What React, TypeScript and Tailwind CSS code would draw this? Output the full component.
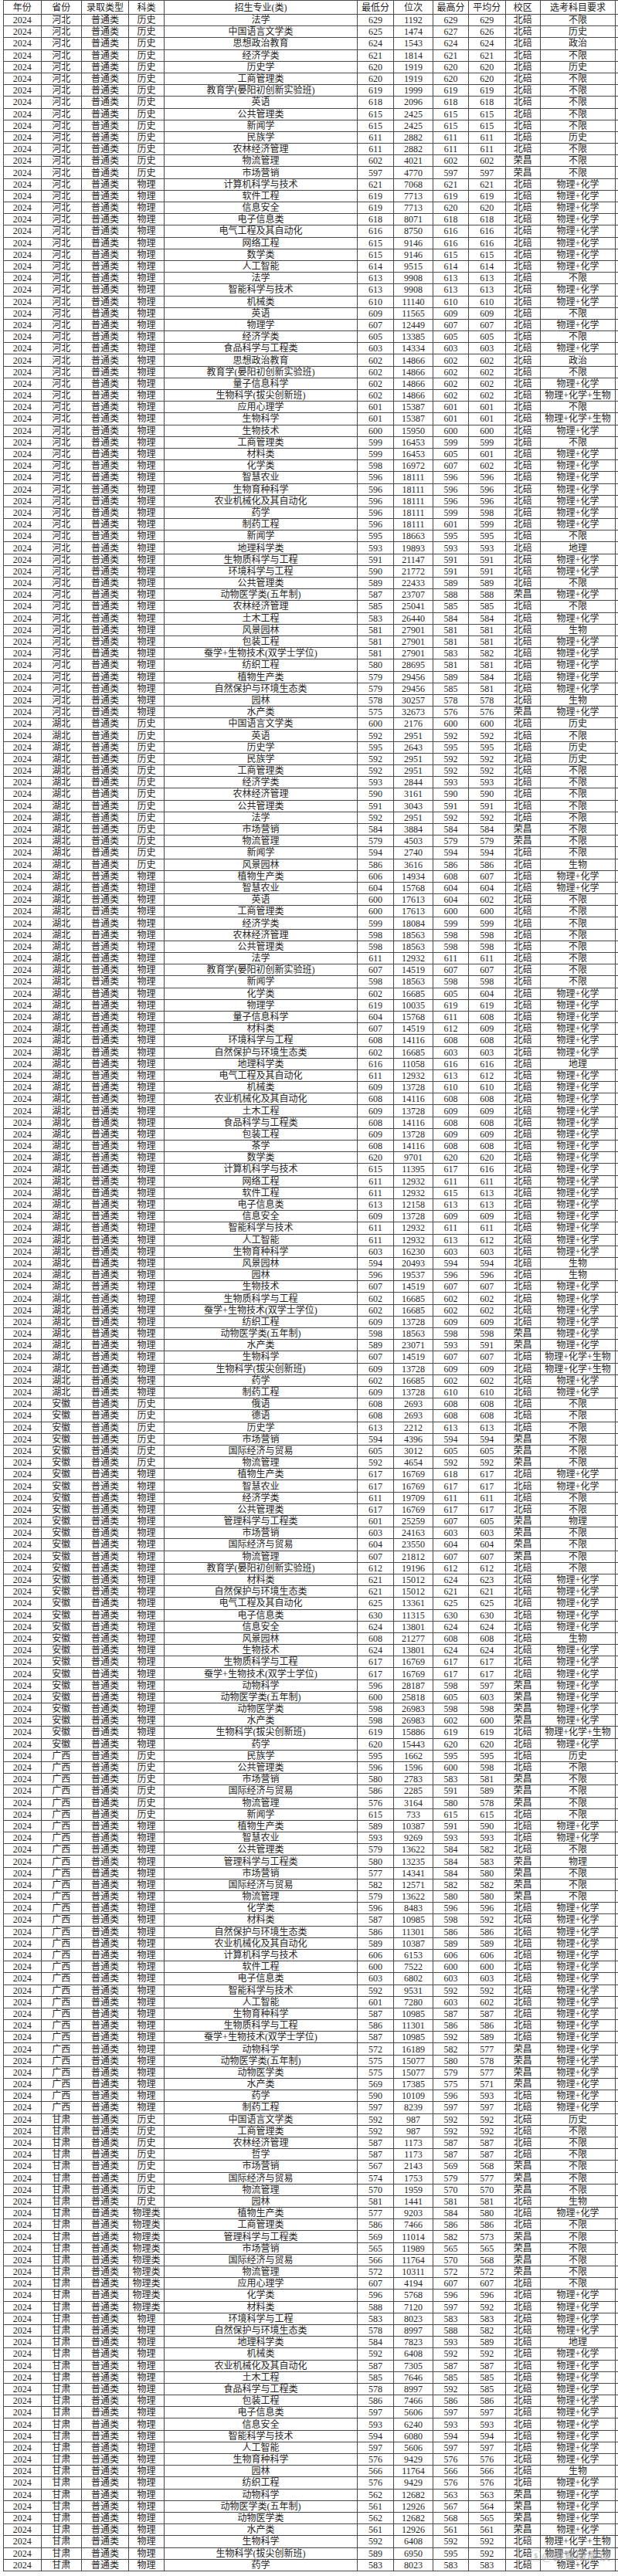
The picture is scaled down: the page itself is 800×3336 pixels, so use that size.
import React from "react";

// 2024 各省录取分数表
const groups: [string, string, string[]][] = [
    ["河北", "历史", [
        "法学 629 1192 629 629 北碚 不限",
        "中国语言文学类 625 1474 627 626 北碚 历史",
        "思想政治教育 624 1543 624 624 北碚 政治",
        "经济学类 621 1814 621 621 北碚 不限",
        "历史学 620 1919 620 620 北碚 历史",
        "工商管理类 620 1919 620 620 北碚 不限",
        "教育学(晏阳初创新实验班) 619 1999 619 619 北碚 不限",
        "英语 618 2096 618 618 北碚 不限",
        "公共管理类 615 2425 615 615 北碚 不限",
        "新闻学 615 2425 615 615 北碚 不限",
        "民族学 611 2882 611 611 北碚 历史",
        "农林经济管理 611 2882 611 611 北碚 不限",
        "物流管理 602 4021 602 602 荣昌 不限",
        "市场营销 597 4770 597 597 荣昌 不限",
    ]],
    ["河北", "物理", [
        "计算机科学与技术 621 7068 621 621 北碚 物理+化学",
        "软件工程 619 7713 619 619 北碚 物理+化学",
        "信息安全 619 7713 620 620 北碚 物理+化学",
        "电子信息类 618 8071 618 618 北碚 物理+化学",
        "电气工程及其自动化 616 8750 616 616 北碚 物理+化学",
        "网络工程 615 9146 616 616 北碚 物理+化学",
        "数学类 615 9146 615 615 北碚 物理+化学",
        "人工智能 614 9515 614 614 北碚 物理+化学",
        "法学 613 9908 613 613 北碚 不限",
        "智能科学与技术 613 9908 613 613 北碚 物理+化学",
        "机械类 610 11140 610 610 北碚 物理+化学",
        "英语 609 11565 609 609 北碚 不限",
        "物理学 607 12449 607 607 北碚 物理+化学",
        "经济学类 605 13385 605 605 北碚 不限",
        "食品科学与工程类 603 14334 603 603 北碚 物理+化学",
        "思想政治教育 602 14866 602 602 北碚 政治",
        "教育学(晏阳初创新实验班) 602 14866 602 602 北碚 不限",
        "量子信息科学 602 14866 602 602 北碚 物理+化学",
        "生物科学(拔尖创新班) 602 14866 602 602 北碚 物理+化学+生物",
        "应用心理学 601 15387 601 601 北碚 不限",
        "生物科学 601 15387 601 601 北碚 物理+化学+生物",
        "生物技术 600 15950 600 600 北碚 物理+化学",
        "工商管理类 599 16453 599 599 北碚 不限",
        "材料类 599 16453 605 601 北碚 物理+化学",
        "化学类 598 16972 607 602 北碚 物理+化学",
        "智慧农业 596 18111 596 596 北碚 物理+化学",
        "生物育种科学 596 18111 596 596 北碚 物理+化学",
        "农业机械化及其自动化 596 18111 596 596 北碚 物理+化学",
        "药学 596 18111 599 598 北碚 物理+化学",
        "制药工程 596 18111 601 599 北碚 物理+化学",
        "新闻学 595 18663 595 595 北碚 不限",
        "地理科学类 593 19893 593 593 北碚 地理",
        "生物质科学与工程 591 21147 591 591 北碚 物理+化学",
        "环境科学与工程 590 21772 591 591 北碚 物理+化学",
        "公共管理类 589 22433 589 589 北碚 不限",
        "动物医学类(五年制) 587 23707 588 588 荣昌 物理+化学",
        "农林经济管理 585 25041 585 585 北碚 不限",
        "土木工程 583 26440 584 584 北碚 物理+化学",
        "风景园林 581 27901 581 581 北碚 生物",
        "包装工程 581 27901 581 581 北碚 物理+化学",
        "蚕学+生物技术(双学士学位) 581 27901 583 582 北碚 物理+化学",
        "纺织工程 580 28695 581 581 北碚 物理+化学",
        "植物生产类 579 29456 589 584 北碚 物理+化学",
        "自然保护与环境生态类 579 29456 585 581 北碚 物理+化学",
        "园林 578 30257 578 578 北碚 生物",
        "水产类 575 32673 576 576 荣昌 物理+化学",
    ]],
    ["湖北", "历史", [
        "中国语言文学类 600 2176 600 600 北碚 历史",
        "英语 592 2951 592 592 北碚 不限",
        "历史学 595 2643 595 595 北碚 历史",
        "民族学 592 2951 592 592 北碚 历史",
        "工商管理类 592 2951 592 592 北碚 不限",
        "经济学类 593 2844 593 593 北碚 不限",
        "农林经济管理 590 3161 590 590 北碚 不限",
        "公共管理类 591 3043 591 591 北碚 不限",
        "法学 592 2951 592 592 北碚 不限",
        "市场营销 584 3884 584 584 荣昌 不限",
        "物流管理 579 4503 579 579 荣昌 不限",
        "新闻学 594 2740 594 594 北碚 不限",
        "风景园林 586 3616 586 586 北碚 生物",
    ]],
    ["湖北", "物理", [
        "植物生产类 606 14934 608 607 北碚 物理+化学",
        "智慧农业 604 15768 604 604 北碚 物理+化学",
        "英语 600 17613 604 602 北碚 不限",
        "工商管理类 600 17613 600 600 北碚 不限",
        "经济学类 599 18084 599 599 北碚 不限",
        "农林经济管理 598 18563 598 598 北碚 不限",
        "公共管理类 598 18563 598 598 北碚 不限",
        "法学 611 12932 611 611 北碚 不限",
        "教育学(晏阳初创新实验班) 607 14519 607 607 北碚 不限",
        "新闻学 598 18563 598 598 北碚 不限",
        "化学类 602 16685 605 604 北碚 物理+化学",
        "物理学 619 10035 619 619 北碚 物理+化学",
        "量子信息科学 604 15768 611 608 北碚 物理+化学",
        "材料类 607 14519 612 609 北碚 物理+化学",
        "环境科学与工程 608 14116 608 608 北碚 物理+化学",
        "自然保护与环境生态类 602 16685 603 603 北碚 物理+化学",
        "地理科学类 616 11058 616 616 北碚 地理",
        "电气工程及其自动化 611 12932 613 612 北碚 物理+化学",
        "机械类 609 13728 610 610 北碚 物理+化学",
        "农业机械化及其自动化 608 14116 608 608 北碚 物理+化学",
        "土木工程 609 13728 609 609 北碚 物理+化学",
        "食品科学与工程类 608 14116 608 608 北碚 物理+化学",
        "包装工程 609 13728 609 609 北碚 物理+化学",
        "茶学 608 14116 608 608 北碚 物理+化学",
        "数学类 620 9701 620 620 北碚 物理+化学",
        "计算机科学与技术 615 11395 617 616 北碚 物理+化学",
        "网络工程 611 12932 611 611 北碚 物理+化学",
        "软件工程 611 12932 615 613 北碚 物理+化学",
        "电子信息类 613 12158 613 613 北碚 物理+化学",
        "信息安全 609 13728 609 609 北碚 物理+化学",
        "智能科学与技术 611 12932 611 611 北碚 物理+化学",
        "人工智能 611 12932 613 612 北碚 物理+化学",
        "生物育种科学 603 16230 603 603 北碚 物理+化学",
        "风景园林 594 20493 594 594 北碚 生物",
        "园林 596 19537 596 596 北碚 生物",
        "生物技术 607 14519 607 607 北碚 物理+化学",
        "生物质科学与工程 602 16685 602 602 北碚 物理+化学",
        "蚕学+生物技术(双学士学位) 602 16685 602 602 北碚 物理+化学",
        "纺织工程 609 13728 609 609 北碚 物理+化学",
        "动物医学类(五年制) 598 18563 598 598 荣昌 物理+化学",
        "水产类 589 23071 593 591 荣昌 物理+化学",
        "生物科学 607 14519 607 607 北碚 物理+化学+生物",
        "生物科学(拔尖创新班) 609 13728 609 609 北碚 物理+化学+生物",
        "药学 602 16685 602 602 北碚 物理+化学",
        "制药工程 609 13728 610 610 北碚 物理+化学",
    ]],
    ["安徽", "历史", [
        "俄语 608 2693 608 608 北碚 不限",
        "德语 608 2693 608 608 北碚 不限",
        "历史学 613 2212 613 613 北碚 不限",
        "市场营销 594 4396 594 594 荣昌 不限",
        "国际经济与贸易 605 3012 605 605 荣昌 不限",
        "物流管理 592 4654 592 592 荣昌 不限",
    ]],
    ["安徽", "物理", [
        "植物生产类 617 16769 618 617 北碚 物理+化学",
        "智慧农业 617 16769 617 617 北碚 物理+化学",
        "经济学类 611 19709 611 611 北碚 不限",
        "公共管理类 617 16769 617 617 北碚 不限",
        "管理科学与工程类 601 25259 607 605 荣昌 物理",
        "市场营销 603 24163 603 603 荣昌 不限",
        "国际经济与贸易 604 23550 604 604 荣昌 不限",
        "物流管理 607 21812 607 607 荣昌 不限",
        "教育学(晏阳初创新实验班) 612 19196 612 612 北碚 不限",
        "材料类 621 15012 624 623 北碚 物理+化学",
        "自然保护与环境生态类 621 15012 621 621 北碚 物理+化学",
        "电气工程及其自动化 625 13361 625 625 北碚 物理+化学",
        "电子信息类 630 11315 630 630 北碚 物理+化学",
        "信息安全 624 13801 624 624 北碚 物理+化学",
        "风景园林 608 21277 608 608 北碚 生物",
        "生物技术 624 13801 624 624 北碚 物理+化学",
        "生物质科学与工程 617 16769 617 617 北碚 物理+化学",
        "蚕学+生物技术(双学士学位) 617 16769 617 617 北碚 物理+化学",
        "动物科学 596 28187 598 597 荣昌 物理+化学",
        "动物医学类(五年制) 600 25818 605 603 荣昌 物理+化学",
        "动物医学类 598 26983 598 598 荣昌 物理+化学",
        "水产类 598 26983 602 600 荣昌 物理+化学",
        "生物科学(拔尖创新班) 619 15886 619 619 北碚 物理+化学+生物",
        "药学 620 15443 620 620 北碚 物理+化学",
    ]],
    ["广西", "历史", [
        "民族学 595 1662 595 595 北碚 历史",
        "公共管理类 596 1596 600 598 北碚 不限",
        "市场营销 580 2783 583 581 荣昌 不限",
        "国际经济与贸易 586 2285 591 589 荣昌 不限",
        "物流管理 576 3164 580 578 荣昌 不限",
        "新闻学 615 733 615 615 北碚 不限",
    ]],
    ["广西", "物理", [
        "植物生产类 589 10387 591 590 北碚 物理+化学",
        "智慧农业 593 9269 593 593 北碚 物理+化学",
        "公共管理类 579 13622 584 582 北碚 不限",
        "管理科学与工程类 580 13235 584 583 荣昌 物理",
        "市场营销 577 14341 584 580 荣昌 不限",
        "国际经济与贸易 582 12571 582 582 荣昌 不限",
        "物流管理 579 13622 580 580 荣昌 不限",
        "化学类 596 8483 596 596 北碚 物理+化学",
        "材料类 587 10985 598 592 北碚 物理+化学",
        "自然保护与环境生态类 586 11301 586 586 北碚 物理+化学",
        "农业机械化及其自动化 589 10387 589 589 北碚 物理+化学",
        "计算机科学与技术 606 6153 606 606 北碚 物理+化学",
        "软件工程 600 7522 600 600 北碚 物理+化学",
        "电子信息类 603 6802 603 603 北碚 物理+化学",
        "智能科学与技术 592 9531 592 592 北碚 物理+化学",
        "人工智能 601 7280 603 602 北碚 物理+化学",
        "生物育种科学 587 10985 587 587 北碚 物理+化学",
        "生物质科学与工程 586 11301 586 586 北碚 物理+化学",
        "蚕学+生物技术(双学士学位) 587 10985 592 589 北碚 物理+化学",
        "动物科学 572 16189 582 577 荣昌 物理+化学",
        "动物医学类(五年制) 575 15077 580 578 荣昌 物理+化学",
        "动物医学类 575 15077 579 577 荣昌 物理+化学",
        "水产类 569 17385 575 571 荣昌 物理+化学",
        "药学 590 10109 596 593 北碚 物理+化学",
        "制药工程 597 8239 597 597 北碚 物理+化学",
    ]],
    ["甘肃", "历史", [
        "中国语言文学类 592 987 592 592 北碚 历史",
        "工商管理类 592 987 592 592 北碚 不限",
        "农林经济管理 587 1173 587 587 北碚 不限",
        "哲学 587 1173 587 587 北碚 不限",
        "市场营销 567 2143 569 568 荣昌 不限",
        "国际经济与贸易 574 1753 579 577 荣昌 不限",
        "物流管理 570 1959 570 570 荣昌 不限",
        "园林 581 1441 581 581 北碚 生物",
    ]],
    ["甘肃", "物理类", [
        "植物生产类 577 9203 584 580 北碚 物理+化学",
        "工商管理类 586 7466 586 586 北碚 不限",
        "管理科学与工程类 569 11014 582 573 荣昌 不限",
        "市场营销 565 11989 565 565 荣昌 不限",
        "国际经济与贸易 566 11764 570 568 荣昌 不限",
        "物流管理 572 10311 572 572 荣昌 不限",
        "应用心理学 607 4194 607 607 北碚 不限",
        "化学类 596 5768 596 596 北碚 物理+化学",
        "材料类 588 7120 597 592 北碚 物理+化学",
    ]],
    ["甘肃", "物理", [
        "环境科学与工程 583 8023 583 583 北碚 物理+化学",
        "自然保护与环境生态类 578 8997 588 582 北碚 物理+化学",
        "地理科学类 584 7823 593 589 北碚 地理",
        "机械类 592 6408 592 592 北碚 物理+化学",
        "农业机械化及其自动化 587 7305 587 587 北碚 物理+化学",
        "土木工程 585 7646 585 585 北碚 物理+化学",
        "食品科学与工程类 578 8997 592 585 北碚 物理+化学",
        "包装工程 586 7466 586 586 北碚 物理+化学",
        "电子信息类 597 5606 597 597 北碚 物理+化学",
        "信息安全 593 6240 593 593 北碚 物理+化学",
        "智能科学与技术 594 6080 594 594 北碚 物理+化学",
        "人工智能 597 5606 597 597 北碚 物理+化学",
        "生物育种科学 576 9429 576 576 北碚 物理+化学",
        "园林 566 11764 566 566 北碚 生物",
        "纺织工程 576 9429 576 576 北碚 物理+化学",
        "动物科学 562 12682 563 563 荣昌 物理+化学",
        "动物医学类(五年制) 561 12926 567 564 荣昌 物理+化学",
        "动物医学类 562 12682 568 565 荣昌 物理+化学",
        "水产类 561 12926 561 561 荣昌 物理+化学",
        "生物科学 592 6408 592 592 北碚 物理+化学+生物",
        "生物科学(拔尖创新班) 589 6950 595 592 北碚 物理+化学+生物",
        "药学 583 8023 583 583 北碚 物理+化学",
    ]],
];

const headers = ["年份", "省份", "录取类型", "科类", "招生专业(类)", "最低分", "位次", "最高分", "平均分", "校区", "选考科目要求"];

const gridCols =
    "grid grid-cols-[49.5px_52.5px_61px_46px_250px_47px_51px_46px_47.5px_45.5px_97px]";

function Row({ cells, head }: { cells: string[]; head?: boolean }) {
    return (
        <div
            className={`${gridCols} border-b border-[#4a4a4a] ${
                head ? "h-[19px] border-t" : "h-[15.2px]"
            }`}
        >
            {cells.map((c, i) => (
                <div
                    key={i}
                    className={`flex items-center justify-center overflow-hidden whitespace-nowrap border-r border-[#4a4a4a] leading-none ${
                        i === 0 ? "border-l" : ""
                    }`}
                >
                    {c}
                </div>
            ))}
        </div>
    );
}

export default function App() {
    const rows: string[][] = [];
    groups.forEach(([prov, subj, list]) => {
        list.forEach((line) => {
            const [major, min, rank, max, avg, campus, req] = line.split(" ");
            rows.push(["2024", prov, "普通类", subj, major, min, rank, max, avg, campus, req]);
        });
    });

    return (
        <div className="relative w-[800px] bg-white pl-[4px] text-[12px] text-[#262626] [font-family:'Liberation_Serif','Noto_Sans_CJK_SC',serif]">
            <Row cells={headers} head />
            {rows.map((r, i) => (
                <Row key={i} cells={r} />
            ))}

            {/* watermark */}
            <div className="absolute right-[10px] top-[3299px] text-[15px] font-bold text-[#9a9a9a]/60">
                ⓢ@教育康康谈
            </div>
        </div>
    );
}
